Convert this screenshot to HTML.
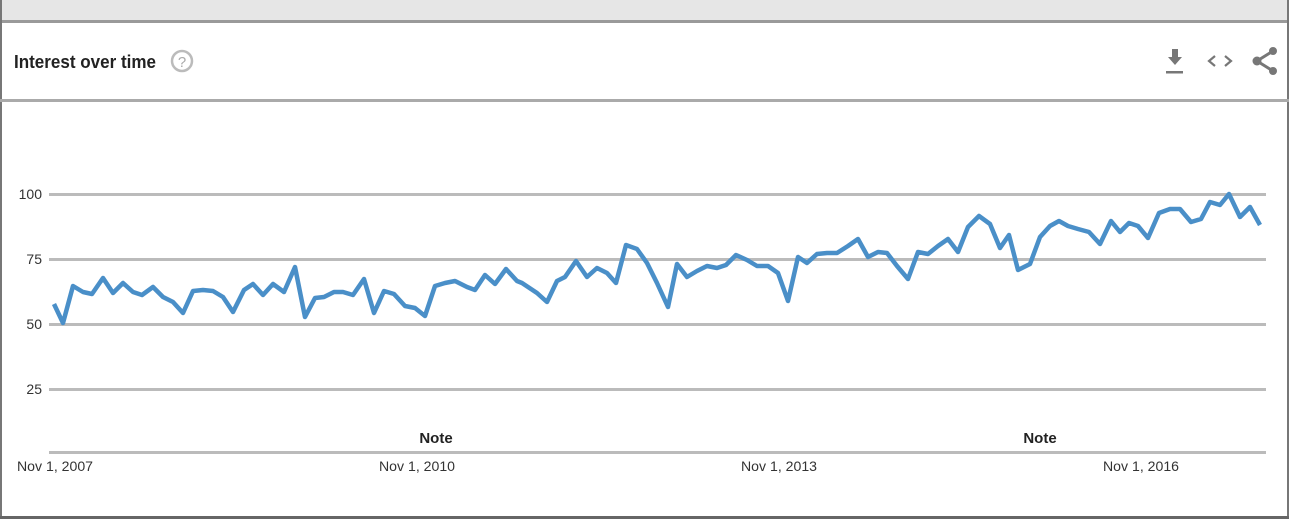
<!DOCTYPE html>
<html><head><meta charset="utf-8"><style>
html,body{margin:0;padding:0;background:#fff;}
body{width:1289px;height:519px;overflow:hidden;position:relative;font-family:"Liberation Sans",Arial,sans-serif;}
</style></head><body>
<svg width="1289" height="519" viewBox="0 0 1289 519" xmlns="http://www.w3.org/2000/svg" style="position:absolute;left:0;top:0">
<rect x="0" y="0" width="1289" height="21" fill="#e6e6e6"/>
<rect x="0" y="20" width="1289" height="3" fill="#9a9a9a"/>
<rect x="0" y="0" width="2" height="519" fill="#777"/>
<rect x="1287" y="0" width="2" height="519" fill="#777"/>
<rect x="0" y="516" width="1289" height="3" fill="#666"/>
<rect x="0" y="99" width="1289" height="3" fill="#aaa"/>
<text x="14" y="68" font-size="18" font-weight="bold" fill="#222" textLength="142" lengthAdjust="spacingAndGlyphs">Interest over time</text>
<circle cx="182" cy="61" r="10" fill="none" stroke="#bbb" stroke-width="2.5"/>
<text x="182" y="67" font-size="15" fill="#aaa" text-anchor="middle">?</text>
<path d="M1172 49h6v8h4l-7 8-7-8h4z" fill="#777"/>
<rect x="1166" y="71" width="17" height="2.5" fill="#777"/>
<path d="M1215 56l-6 5 6 5M1225 56l6 5-6 5" fill="none" stroke="#777" stroke-width="2.2"/>
<g fill="#777"><circle cx="1273" cy="51" r="4"/><circle cx="1257" cy="61" r="4.5"/><circle cx="1273" cy="71" r="4"/></g>
<path d="M1273 51L1257 61L1273 71" fill="none" stroke="#777" stroke-width="3"/>
<g fill="#bbb">
<rect x="49" y="193" width="1217" height="3"/>
<rect x="49" y="258" width="1217" height="3"/>
<rect x="49" y="323" width="1217" height="3"/>
<rect x="49" y="388" width="1217" height="3"/>
<rect x="49" y="451" width="1217" height="3"/>
</g>
<g font-size="14" fill="#333" text-anchor="end">
<text x="42" y="199">100</text><text x="42" y="264">75</text><text x="42" y="329">50</text><text x="42" y="394">25</text>
</g>
<g font-size="15" font-weight="bold" fill="#222" text-anchor="middle">
<text x="436" y="443">Note</text><text x="1040" y="443">Note</text>
</g>
<g font-size="14" fill="#333" text-anchor="middle">
<text x="55" y="471" textLength="76" lengthAdjust="spacingAndGlyphs">Nov 1, 2007</text><text x="417" y="471" textLength="76" lengthAdjust="spacingAndGlyphs">Nov 1, 2010</text><text x="779" y="471" textLength="76" lengthAdjust="spacingAndGlyphs">Nov 1, 2013</text><text x="1141" y="471" textLength="76" lengthAdjust="spacingAndGlyphs">Nov 1, 2016</text>
</g>
<polyline fill="none" stroke="#4a8fc8" stroke-width="4.5" stroke-linejoin="round" points="54,304 63,323 73,286 83,292 92,294 103,278 113,293 123,283 133,292 142,295 153,287 163,297 173,302 183,313 193,291 203,290 213,291 223,297 233,312 244,290 253,284 263,295 273,284 284,292 295,267 305,317 315,298 324,297 334,292 343,292 353,295 364,279 374,313 384,291 394,294 405,306 415,308 425,316 435,286 445,283 455,281 467,287 475,290 485,275 495,284 506,269 517,281 522,283 537,293 547,302 557,281 565,277 576,261 587,277 597,268 607,273 616,283 626,245 637,249 647,263 657,283 668,307 677,264 687,277 697,271 707,266 717,268 726,265 736,255 747,260 757,266 768,266 778,273 788,301 798,257 807,263 817,254 827,253 837,253 848,246 858,239 868,257 878,252 887,253 897,266 908,279 918,252 928,254 938,246 948,239 958,252 968,227 979,216 990,224 1000,248 1009,235 1018,270 1030,264 1040,237 1050,226 1059,221 1068,226 1078,229 1089,232 1100,244 1111,221 1120,232 1129,223 1138,226 1148,238 1159,213 1170,209 1180,209 1191,222 1201,219 1210,202 1220,205 1229,194 1240,217 1250,207 1260,225"/>
</svg>
</body></html>
